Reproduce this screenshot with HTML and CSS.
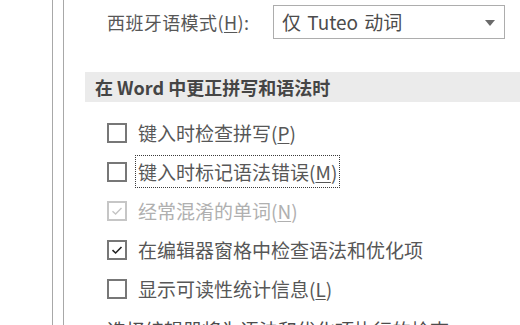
FILE: index.html
```html
<!DOCTYPE html>
<html lang="zh-CN">
<head>
<meta charset="utf-8">
<link rel="stylesheet" href="styles.css">
</head>
<body>
<div class="page">
  <div class="nav"></div>
  <div class="content">
    <div class="mode-row">
      <span class="mode-label">西班牙语模式(<u>H</u>):</span>
      <div class="select">
        <span class="select-text">仅 Tuteo 动词</span>
        <svg class="arrow" width="10" height="6" viewBox="0 0 10 6"><path d="M0 0 L10 0 L5 6 Z" fill="#6a6a6a"/></svg>
      </div>
    </div>
    <div class="section-head">在 Word 中更正拼写和语法时</div>
    <div class="options">
      <div class="opt">
        <span class="box"></span>
        <span class="text">键入时检查拼写(<u>P</u>)</span>
      </div>
      <div class="opt">
        <span class="box"></span>
        <span class="text focus">键入时标记语法错误(<u>M</u>)</span>
      </div>
      <div class="opt disabled">
        <span class="box"><svg width="12" height="10" viewBox="0 0 12 10"><path d="M1.5 5.2 L4.6 8 L10.5 2" fill="none" stroke="#c4c4c4" stroke-width="1.4"/></svg></span>
        <span class="text">经常混淆的单词(<u>N</u>)</span>
      </div>
      <div class="opt">
        <span class="box"><svg width="12" height="10" viewBox="0 0 12 10"><path d="M1.5 5.2 L4.6 8 L10.5 2" fill="none" stroke="#222" stroke-width="1.6"/></svg></span>
        <span class="text">在编辑器窗格中检查语法和优化项</span>
      </div>
      <div class="opt">
        <span class="box"></span>
        <span class="text">显示可读性统计信息(<u>L</u>)</span>
      </div>
      <div class="note">选择编辑器将为语法和优化项执行的检查</div>
    </div>
  </div>
</div>
</body>
</html>
```
FILE: styles.css
```css
html, body {
  margin: 0;
  padding: 0;
  background: #ffffff;
}
body {
  width: 520px;
  height: 325px;
  overflow: hidden;
  font-family: "Noto Sans CJK SC", "Noto Sans", sans-serif;
  color: #575757;
}
.page {
  display: flex;
  height: 325px;
  overflow: hidden;
}
.nav {
  width: 52px;
  flex: none;
  border-right: 1px solid #a8a8a8;
}
.content {
  margin-left: 10px;
  border-left: 1px solid #a8a8a8;
  flex: 1;
  min-width: 0;
}
.mode-row {
  display: flex;
  align-items: center;
  padding-top: 5px;
  padding-left: 43px;
}
.mode-label {
  width: 166px;
  flex: none;
  font-size: 18px;
  letter-spacing: 0.4px;
  line-height: 34px;
  white-space: nowrap;
}
.select {
  height: 32px;
  border: 1px solid #adadad;
  display: flex;
  align-items: center;
  justify-content: space-between;
  padding: 0 9px 0 8px;
  box-sizing: content-box;
  width: 213px;
}
.select-text {
  font-size: 19px;
  word-spacing: 2px;
  line-height: 32px;
  color: #4c4c4c;
}
.arrow {
  margin-top: 1px;
}
.section-head {
  margin: 33px 0 0 21px;
  height: 30px;
  background: #ebebeb;
  padding-left: 10px;
  font-size: 18px;
  font-weight: bold;
  line-height: 30px;
  color: #454545;
  white-space: nowrap;
}
.options {
  padding-top: 11px;
  padding-left: 43px;
}
.opt {
  display: flex;
  align-items: center;
  height: 39px;
}
.box {
  width: 16px;
  height: 16px;
  border: 2px solid #777777;
  flex: none;
  display: flex;
  align-items: center;
  justify-content: center;
  margin-right: 11px;
}
.text {
  font-size: 19px;
  line-height: 33px;
  white-space: nowrap;
}
.focus {
  border: 1px dotted #3a3a3a;
  line-height: 31px;
  padding: 0 2px;
  margin-left: -3px;
}
.disabled .box {
  border-color: #c6c6c6;
}
.disabled .text {
  color: #b0b0b0;
}
.note {
  margin-top: 2px;
  font-size: 19px;
  line-height: 39px;
  white-space: nowrap;
  color: #4c4c4c;
}
u {
  text-decoration-thickness: 1px;
  text-underline-offset: 2px;
}
```
